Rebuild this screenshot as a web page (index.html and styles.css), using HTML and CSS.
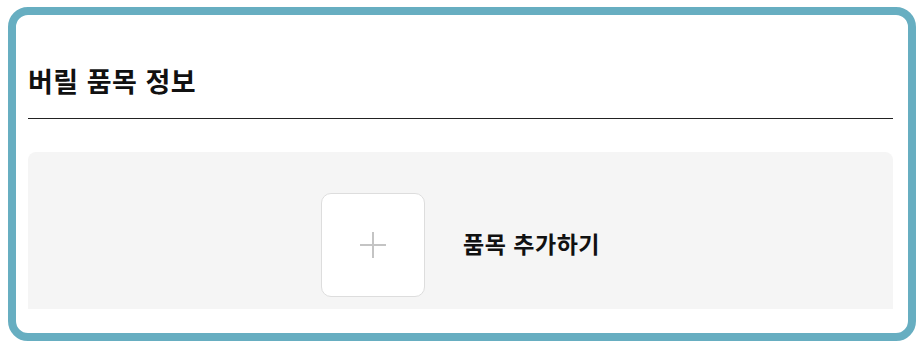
FILE: index.html
```html
<!DOCTYPE html>
<html lang="ko">
<head>
<meta charset="utf-8">
<link rel="stylesheet" href="styles.css">
</head>
<body>
<div class="card">
  <h2 class="title">버릴 품목 정보</h2>
  <div class="items">
    <div class="add-row">
      <div class="add-box">
        <svg width="26" height="26" viewBox="0 0 26 26"><path d="M13 0V26M0 13H26" stroke="#c4c4c4" stroke-width="2" fill="none"/></svg>
      </div>
      <span class="add-label">품목 추가하기</span>
    </div>
  </div>
</div>
</body>
</html>
```
FILE: styles.css
```css
html, body {
  margin: 0;
  padding: 0;
  background: #ffffff;
}
body {
  font-family: "Noto Sans CJK KR", "Noto Sans", sans-serif;
  color: #111111;
}
.card {
  box-sizing: border-box;
  margin: 7px 0 0 8px;
  width: 908px;
  height: 334px;
  border: 8px solid #67aec1;
  border-radius: 20px;
  background: #ffffff;
  padding: 0 15px 0 12px;
  overflow: hidden;
}
.title {
  margin: 0;
  padding: 47px 0 19px;
  font-size: 27px;
  line-height: 37px;
  font-weight: 700;
  letter-spacing: 0.5px;
  border-bottom: 1px solid #222222;
}
.items {
  margin-top: 33px;
  height: 157px;
  box-sizing: border-box;
  padding-top: 41px;
  background: #f5f5f5;
  border-radius: 8px 8px 0 0;
  display: flex;
  justify-content: center;
  align-items: flex-start;
}
.add-row {
  display: flex;
  align-items: center;
  gap: 38px;
}
.add-box {
  box-sizing: border-box;
  width: 104px;
  height: 104px;
  background: #ffffff;
  border: 1px solid #dddddd;
  border-radius: 10px;
  display: flex;
  align-items: center;
  justify-content: center;
}
.add-label {
  font-size: 23px;
  font-weight: 700;
  line-height: 30px;
  letter-spacing: 0.5px;
  padding-bottom: 5px;
  color: #111111;
}
```
